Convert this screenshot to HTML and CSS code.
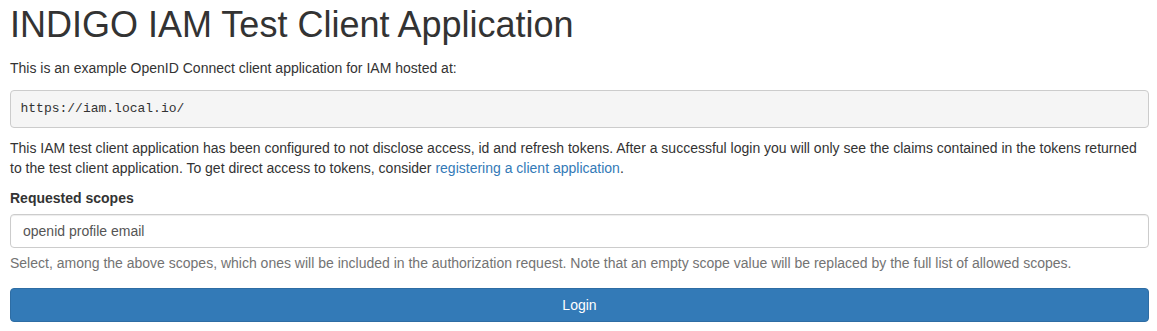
FILE: index.html
```html
<!DOCTYPE html>
<html lang="en">
<head>
    <meta charset="UTF-8">
    <title>INDIGO IAM Test Client Application</title>
    <link rel="stylesheet" href="styles.css">
</head>
<body>
    <div class="container">
        <h1>INDIGO IAM Test Client Application</h1>
        <p class="intro">This is an example OpenID Connect client application for IAM hosted at:</p>
        <pre>https://iam.local.io/</pre>
        <p>This IAM test client application has been configured to not disclose access, id and refresh tokens. After a successful login you will only see the claims contained in the tokens returned to the test client application. To get direct access to tokens, consider <a href="#">registering a client application</a>.</p>

        <!-- Login form -->
        <form class="login-form">
            <div class="form-group">
                <label for="scopes">Requested scopes</label>
                <input type="text" id="scopes" class="form-control" value="openid profile email">
                <span class="help-block">Select, among the above scopes, which ones will be included in the authorization request. Note that an empty scope value will be replaced by the full list of allowed scopes.</span>
            </div>
            <button type="submit" class="btn btn-primary btn-block">Login</button>
        </form>
    </div>
</body>
</html>
```

FILE: styles.css
```css
body {
    margin: 0;
    font-family: "Liberation Sans", Arial, Helvetica, sans-serif;
    font-size: 14px;
    line-height: 1.42857143;
    color: #333;
    background: #fff;
}
.container {
    padding: 0 8px 0 10px;
}
h1 {
    font-size: 36px;
    font-weight: 500;
    line-height: 1.1;
    margin: 5px 0 13px 0;
}
p {
    margin: 0 0 10px;
}
p.intro {
    margin-bottom: 12px;
}
a {
    color: #337ab7;
    text-decoration: none;
}
pre {
    display: block;
    margin: 0 0 10px;
    padding: 9px 9.5px;
    font-family: "Liberation Mono", "DejaVu Sans Mono", monospace;
    font-size: 13px;
    line-height: 1.42857143;
    color: #333;
    background: #f5f5f5;
    border: 1px solid #ccc;
    border-radius: 4px;
}
.form-group {
    margin-bottom: 15px;
}
label {
    display: inline-block;
    margin-bottom: 6px;
    font-weight: 700;
}
.form-control {
    display: block;
    box-sizing: border-box;
    width: 100%;
    height: 34px;
    padding: 6px 12px;
    font-family: inherit;
    font-size: 14px;
    line-height: 1.42857143;
    color: #555;
    background: #fff;
    border: 1px solid #ccc;
    border-radius: 4px;
    box-shadow: inset 0 1px 1px rgba(0,0,0,0.075);
}
.help-block {
    display: block;
    margin: 5px 0 10px;
    color: #737373;
}
.btn {
    display: inline-block;
    padding: 6px 12px;
    font-family: inherit;
    font-size: 14px;
    line-height: 1.42857143;
    text-align: center;
    border: 1px solid transparent;
    border-radius: 4px;
    cursor: pointer;
}
.btn-primary {
    color: #fff;
    background: #337ab7;
    border-color: #2e6da4;
}
.btn-block {
    display: block;
    width: 100%;
}
```
